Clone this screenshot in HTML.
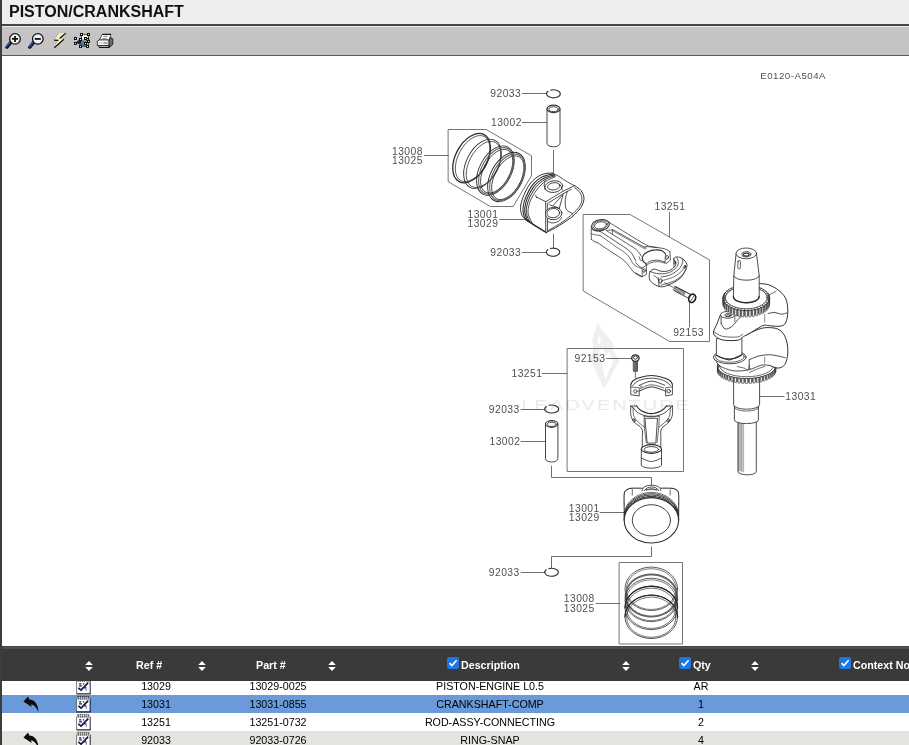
<!DOCTYPE html>
<html>
<head>
<meta charset="utf-8">
<title>PISTON/CRANKSHAFT</title>
<style>
html,body{margin:0;padding:0;overflow:hidden;}
body{width:909px;height:745px;overflow:hidden;background:#fff;position:relative;font-family:"Liberation Sans",sans-serif;}
.abs{position:absolute;}
#lb{left:0;top:0;width:2px;height:745px;background:#3d3d3d;z-index:6;}
#title{left:2px;top:0;width:907px;height:24px;background:#eeeeee;}
#title span{will-change:transform;position:absolute;left:6.6px;top:2px;font-size:16px;font-weight:bold;color:#111;line-height:19px;white-space:nowrap;}
#l1{left:0;top:24px;width:909px;height:2px;background:#444;}
#l2{left:2px;top:26px;width:907px;height:1px;background:#ececec;}
#tool{left:2px;top:27px;width:907px;height:28px;background:#c5c3c4;}
#l3{left:0;top:55px;width:909px;height:1px;background:#5a5a5a;}
#hdrtop{left:0;top:646px;width:909px;height:3.4px;background:linear-gradient(#3e3f3d,#555654 60%,#4a4b49);z-index:5;}
#hdr{left:0;top:648px;width:909px;height:32px;background:#3a3b38;}
.row{left:2px;width:907px;height:18px;font-size:10.7px;color:#000;}
.row span{will-change:transform;position:absolute;top:0;line-height:18px;text-align:center;white-space:nowrap;}
.hd{will-change:transform;position:absolute;color:#fff;font-weight:bold;font-size:10.7px;line-height:14px;white-space:nowrap;}
</style>
</head>
<body>
<div class="abs" id="title"><span>PISTON/CRANKSHAFT</span></div>
<div class="abs" id="l1"></div>
<div class="abs" id="l2"></div>
<div class="abs" id="tool"></div>
<div class="abs" id="l3"></div>
<!-- toolbar icons -->
<svg class="abs" style="left:0;top:27px;" width="130" height="28" viewBox="0 27 130 28">
<defs>
<linearGradient id="hg" x1="0" y1="0" x2="1" y2="1"><stop offset="0" stop-color="#5d8fd0"/><stop offset="0.5" stop-color="#1c3c78"/><stop offset="1" stop-color="#0a1430"/></linearGradient>
</defs>
<g id="zin">
<path d="M10.6 42.6 L6.9 47.2" stroke="#0c1836" stroke-width="3.4" stroke-linecap="round"/>
<path d="M10.1 42.2 L6.5 46.6" stroke="#3565ad" stroke-width="1.1" stroke-linecap="round"/>
<circle cx="15" cy="38.9" r="5.3" fill="#f4f4f4" stroke="#111" stroke-width="1.3"/>
<path d="M12 38.9 H18 M15 35.9 V41.9" stroke="#111" stroke-width="1.8"/>
</g>
<g id="zout">
<path d="M33.4 42.6 L29.7 47.2" stroke="#0c1836" stroke-width="3.4" stroke-linecap="round"/>
<path d="M32.9 42.2 L29.3 46.6" stroke="#3565ad" stroke-width="1.1" stroke-linecap="round"/>
<circle cx="37.8" cy="38.9" r="5.3" fill="#f4f4f4" stroke="#111" stroke-width="1.3"/>
<path d="M34.8 38.9 H40.8" stroke="#111" stroke-width="1.8"/>
</g>
<g id="bolt">
<path d="M58.5 33.2 L65.7 33 L59.5 38.6 L63.8 39.2 L54.2 47.7 L56.9 40.9 L54.05 39.9 Z" fill="#f1f3c2"/>
<path d="M65.7 33.1 L59.6 38.5 M63.9 39.3 L54.3 47.7 M54.1 40.1 L58.4 40.4" stroke="#0a0a0a" stroke-width="1.15" fill="none"/>
<path d="M58.5 33.5 L55.1 38.6 M57 41.3 L55.2 44.8" stroke="#333" stroke-width="0.6" stroke-dasharray="0.6 0.7" fill="none"/>
</g>
<g id="sel">
<rect x="81.8" y="35.3" width="6" height="3.8" fill="#f6f6e2"/>
<path d="M75.9 42.7 L79.7 38.9 L81.8 39.7 L81.8 44.4 L79.7 44.4 Z" fill="#1b1b5e"/>
<circle cx="83.7" cy="43.2" r="2.9" fill="#2e8f8a"/>
<path d="M81.45 34.5 H88.45" stroke="#5a2a1a" stroke-width="0.7"/>
<path d="M88.45 34.5 V46.4 M81.45 34.5 V39 M80.5 46.4 H87.5" stroke="#111" stroke-width="0.7"/>
<rect x="79.95" y="33.00" width="3" height="3" fill="#0a0a0a"/><rect x="80.95" y="34.00" width="1" height="1" fill="#fff"/><rect x="86.95" y="33.00" width="3" height="3" fill="#0a0a0a"/><rect x="87.95" y="34.00" width="1" height="1" fill="#fff"/><rect x="73.96" y="37.00" width="3" height="3" fill="#0a0a0a"/><rect x="74.96" y="38.00" width="1" height="1" fill="#fff"/><rect x="73.96" y="41.90" width="3" height="3" fill="#0a0a0a"/><rect x="74.96" y="42.90" width="1" height="1" fill="#fff"/><rect x="79.00" y="37.90" width="3" height="3" fill="#0a0a0a"/><rect x="80.00" y="38.90" width="1" height="1" fill="#fff"/><rect x="84.00" y="37.00" width="3" height="3" fill="#0a0a0a"/><rect x="85.00" y="38.00" width="1" height="1" fill="#fff"/><rect x="86.10" y="37.90" width="3" height="3" fill="#0a0a0a"/><rect x="87.10" y="38.90" width="1" height="1" fill="#fff"/><rect x="87.00" y="39.95" width="3" height="3" fill="#0a0a0a"/><rect x="88.00" y="40.95" width="1" height="1" fill="#fff"/><rect x="84.00" y="41.90" width="3" height="3" fill="#0a0a0a"/><rect x="85.00" y="42.90" width="1" height="1" fill="#fff"/><rect x="79.00" y="44.90" width="3" height="3" fill="#0a0a0a"/><rect x="80.00" y="45.90" width="1" height="1" fill="#fff"/><rect x="86.00" y="44.90" width="3" height="3" fill="#0a0a0a"/><rect x="87.00" y="45.90" width="1" height="1" fill="#fff"/>
</g>
<g id="prn">
<path d="M108.6 38.6 L111 37.6 L112.9 38.9 L112.9 44.4 L110 46.9 L108.8 46.9 Z" fill="#4a4a4a" stroke="#111" stroke-width="0.6"/>
<path d="M109.6 39.4 L111.8 40.6 M109.6 41.6 L111.8 42.8 M109.6 43.8 L111.6 44.6" stroke="#bdbdbd" stroke-width="0.7"/>
<path d="M102.3 34.4 L110.9 34.4 L108.9 40.2 L99.3 40.2 Z" fill="#fdfdfd" stroke="#111" stroke-width="0.7"/>
<path d="M102.2 34.4 H110.9" stroke="#111" stroke-width="1.1"/>
<path d="M103.4 36.4 H107.6 M102.4 38.4 H106.6" stroke="#666" stroke-width="0.8"/>
<path d="M97.3 41.2 L99.4 39.9 L108.8 39.9 L108.8 45.5 L97.3 45.5 Z" fill="#f4f4f4" stroke="#111" stroke-width="0.8"/>
<path d="M97.8 42.9 H108.4" stroke="#bbb" stroke-width="0.8"/>
<path d="M103.8 43 H107.4" stroke="#555" stroke-width="0.7"/>
<path d="M98.6 45.6 L99.2 47.3 L108.6 47.3 L108.8 45.6 Z" fill="#fafafa" stroke="#111" stroke-width="0.8"/>
<path d="M99 47.4 H109.6" stroke="#111" stroke-width="1.1"/>
</g>
</svg>

<svg class="abs" style="left:0;top:56px;will-change:transform;" width="909" height="590" viewBox="0 56 909 590" fill="none" stroke="#333" stroke-width="0.9" stroke-linecap="round" stroke-linejoin="round">
<style>
.lb{font-family:"Liberation Sans",sans-serif;font-size:10.3px;fill:#505050;stroke:none;}
.bx{stroke:#666;stroke-width:0.9;}
.ld{stroke:#555;stroke-width:0.85;}
.w{fill:#fff;}
</style>
<!-- code label -->
<text class="lb" x="760.3" y="79.1" style="font-size:9.7px;" textLength="65.2">E0120-A504A</text>
<!-- labels -->
<g>
<text class="lb" x="490.3" y="97.1" textLength="30.4">92033</text>
<text class="lb" x="491" y="125.8" textLength="30.4">13002</text>
<text class="lb" x="392" y="154.8" textLength="30.4">13008</text>
<text class="lb" x="392" y="163.8" textLength="30.4">13025</text>
<text class="lb" x="467.5" y="218.3" textLength="30.4">13001</text>
<text class="lb" x="467.5" y="227.3" textLength="30.4">13029</text>
<text class="lb" x="490.3" y="255.6" textLength="30.4">92033</text>
<text class="lb" x="654.5" y="210.3" textLength="30.4">13251</text>
<text class="lb" x="673.2" y="335.6" textLength="30.4">92153</text>
<text class="lb" x="574.5" y="362.0" textLength="30.4">92153</text>
<text class="lb" x="511.5" y="376.7" textLength="30.4">13251</text>
<text class="lb" x="488.8" y="412.6" textLength="30.4">92033</text>
<text class="lb" x="489.5" y="445.0" textLength="30.4">13002</text>
<text class="lb" x="785.3" y="400.3" textLength="30.4">13031</text>
<text class="lb" x="568.8" y="512.0" textLength="30.4">13001</text>
<text class="lb" x="568.8" y="520.9" textLength="30.4">13029</text>
<text class="lb" x="488.8" y="575.7" textLength="30.4">92033</text>
<text class="lb" x="563.8" y="602.1" textLength="30.4">13008</text>
<text class="lb" x="563.8" y="611.5" textLength="30.4">13025</text>
</g>
<!-- leaders -->
<g class="ld">
<path d="M522.3 93.5 L546.6 93.5"/>
<path d="M522.3 122.5 L547.0 122.5"/>
<path d="M424.5 155.5 L448.4 155.5"/>
<path d="M499.5 219.5 L526.0 219.5"/>
<path d="M522.3 252.5 L546.4 252.5"/>
<path d="M669.5 212.5 L669.5 236.7"/>
<path d="M689.5 302.0 L689.5 327.0"/>
<path d="M606.5 358.5 L631.5 358.5"/>
<path d="M542.3 373.5 L567.0 373.5"/>
<path d="M521.0 409.5 L545.0 409.5"/>
<path d="M521.0 441.5 L545.5 441.5"/>
<path d="M759.8 396.5 L784.0 396.5"/>
<path d="M600.0 512.5 L624.3 512.5"/>
<path d="M521.0 572.5 L544.8 572.5"/>
<path d="M596.0 603.5 L619.8 603.5"/>
<!-- axis lines -->
<path d="M553.5 150.0 L553.5 172.8"/>
<path d="M553.5 234.0 L553.5 247.4"/>
<path d="M551.5 466.0 L551.5 477.5 L651.5 477.5 L651.5 485.6"/>
<path d="M651.5 547.0 L651.5 556.5 L551.5 556.5 L551.5 567.9"/>
</g>
<!-- boxes -->
<g class="bx">
<path d="M448.5 129.5 H486.2 L531.5 155.8 V175.7 L513.2 206.5 H490.3 L448.5 181.9 Z"/>
<path d="M583.5 214.5 H630.1 L709.5 259.9 V341.5 H669.7 L583.5 291.1 Z"/>
<rect x="567.5" y="348.5" width="116" height="123"/>
<rect x="619.5" y="562.5" width="63" height="81.5"/>
</g>
<!-- snap rings -->
<g stroke-width="1.1">
<path d="M550.82 90.09 A6.9 4 0 1 1 548.11 91.23"/>
<path d="M550.49 248.49 A6.7 4 0 1 1 547.87 249.63"/>
<path d="M549.08 405.29 A7 4 0 1 1 546.34 406.43"/>
<path d="M548.95 568.59 A6.8 4 0 1 1 546.29 569.73"/>
</g>
<!-- pins -->
<g>
<path class="w" d="M547 109 V143.4 A6.5 3.4 0 0 0 560 143.4 V109"/>
<ellipse class="w" cx="553.5" cy="108.9" rx="6.5" ry="3.7" stroke-width="1.2"/>
<ellipse cx="553.5" cy="109.2" rx="4.6" ry="2.4"/>
<path class="w" d="M545.5 424 V458.7 A6.2 3.3 0 0 0 557.9 458.7 V424"/>
<ellipse class="w" cx="551.7" cy="424" rx="6.2" ry="3.3" stroke-width="1.2"/>
<ellipse cx="551.7" cy="424.3" rx="4.4" ry="2.1"/>
</g>

<!-- rings tilted -->
<g stroke="#2a2a2a" stroke-width="0.8">
<ellipse cx="471.6" cy="158.1" rx="16" ry="26.6" transform="rotate(28 471.6 158.1)" stroke-width="1.25"/>
<ellipse cx="472.6" cy="158.6" rx="14.4" ry="25" transform="rotate(28 472.6 158.6)" stroke-width="0.7"/>
<ellipse cx="482.5" cy="163.9" rx="16" ry="26.6" transform="rotate(28 482.5 163.9)" stroke-width="0.9"/>
<ellipse cx="483.5" cy="164.4" rx="14.4" ry="25" transform="rotate(28 483.5 164.4)" stroke-width="0.7"/>
<ellipse cx="495.4" cy="170.6" rx="16" ry="26.6" transform="rotate(28 495.4 170.6)" stroke-width="0.9"/>
<ellipse cx="496.1" cy="170.9" rx="14.6" ry="25.2" transform="rotate(28 496.1 170.9)" stroke-width="1.3" stroke-dasharray="0.6 1.1" stroke="#666"/>
<ellipse cx="496.7" cy="171.2" rx="13.2" ry="23.8" transform="rotate(28 496.7 171.2)" stroke-width="0.75"/>
<ellipse cx="506.5" cy="177.0" rx="16" ry="26.6" transform="rotate(28 506.5 177.0)" stroke-width="0.9"/>
<ellipse cx="507.2" cy="177.3" rx="14.6" ry="25.2" transform="rotate(28 507.2 177.3)" stroke-width="1.3" stroke-dasharray="0.6 1.1" stroke="#666"/>
<ellipse cx="507.8" cy="177.7" rx="13.2" ry="23.8" transform="rotate(28 507.8 177.7)" stroke-width="0.75"/>
</g>

<!-- rings front -->
<g stroke="#2a2a2a" stroke-width="0.8">
<ellipse cx="651.3" cy="588.8" rx="26.3" ry="21.7" stroke-width="0.75"/>
<ellipse cx="651.3" cy="589.0999999999999" rx="24.9" ry="20.4" stroke-width="0.6"/>
<ellipse cx="651.3" cy="595.5" rx="25.6" ry="21" stroke="#666" stroke-width="2" stroke-dasharray="1.1 1.0"/>
<ellipse cx="651.3" cy="599.9" rx="26.3" ry="21.7" stroke-width="0.75"/>
<ellipse cx="651.3" cy="600.1999999999999" rx="24.9" ry="20.4" stroke-width="0.6"/>
<ellipse cx="651.3" cy="607.9" rx="26.3" ry="21.7" stroke-width="0.8"/>
<path d="M625.0 607.9 A26.3 21.7 0 0 1 677.5999999999999 607.9" stroke-width="1.35"/>
<ellipse cx="651.3" cy="608.3" rx="24.6" ry="20.1" stroke-width="0.65"/>
<ellipse cx="651.3" cy="616.8" rx="26.3" ry="21.7" stroke-width="0.8"/>
<path d="M625.0 616.8 A26.3 21.7 0 0 1 677.5999999999999 616.8" stroke-width="1.35"/>
<ellipse cx="651.3" cy="617.1999999999999" rx="24.6" ry="20.1" stroke-width="0.65"/>
</g>

<!-- piston tilted -->
<g stroke="#2e2e2e" stroke-width="0.85">
<path class="w" d="M552.2 173.1 C551.1 173.1 547.7 172.9 545.2 173.6 C542.7 174.2 539.8 175.2 537.1 177.1 C534.5 179.0 531.4 181.8 529.1 185.1 C526.7 188.5 524.5 193.5 523.1 197.2 C521.6 200.9 520.7 204.3 520.5 207.3 C520.4 210.3 521.1 213.2 522.0 215.3 C523.0 217.4 524.2 218.4 526.1 219.9 C527.9 221.4 530.6 222.8 533.1 224.4 C535.6 226.0 539.0 228.1 541.2 229.4 C543.4 230.8 543.9 232.7 546.2 232.5 C548.6 232.2 552.4 229.5 555.3 227.9 C558.1 226.3 560.6 224.6 563.3 222.9 C566.0 221.1 569.0 219.2 571.4 217.4 C573.7 215.5 575.7 213.7 577.4 211.8 C579.2 209.9 580.9 207.9 581.9 205.8 C583.0 203.7 583.8 201.3 584.0 199.2 C584.1 197.1 583.5 195.0 582.7 193.2 C581.8 191.4 580.3 189.6 578.9 188.4 C577.6 187.1 576.3 186.7 574.4 185.6 C572.5 184.6 569.9 183.4 567.4 181.9 C564.8 180.4 561.8 178.1 559.3 176.6 C556.8 175.1 553.4 173.6 552.2 173.1 C551.1 172.5 553.4 173.0 552.2 173.1 Z" stroke="none"/>
<path d="M552.2 173.1 C551.1 173.1 547.7 172.9 545.2 173.6 C542.7 174.2 539.8 175.2 537.1 177.1 C534.5 179.0 531.4 181.8 529.1 185.1 C526.7 188.5 524.5 193.5 523.1 197.2 C521.6 200.9 520.7 204.3 520.5 207.3 C520.4 210.3 521.1 213.2 522.0 215.3 C523.0 217.4 524.2 218.4 526.1 219.9 C527.9 221.4 530.6 222.8 533.1 224.4 C535.6 226.0 539.0 228.1 541.2 229.4 C543.4 230.8 545.4 231.9 546.2 232.5" stroke-width="1"/>
<path d="M546.2 232.5 C547.7 231.7 552.4 229.5 555.3 227.9 C558.1 226.3 560.6 224.6 563.3 222.9 C566.0 221.1 569.0 219.2 571.4 217.4 C573.7 215.5 575.7 213.7 577.4 211.8 C579.2 209.9 580.9 207.9 581.9 205.8 C583.0 203.7 583.8 201.3 584.0 199.2 C584.1 197.1 583.5 195.0 582.7 193.2 C581.8 191.4 580.3 189.6 578.9 188.4 C577.6 187.1 575.2 186.1 574.4 185.6" stroke-width="1"/>
<path d="M526.1 219.9 C527.2 220.6 530.6 222.8 533.1 224.4 C535.6 226.0 539.0 228.1 541.2 229.4 C543.4 230.8 545.4 231.9 546.2 232.5" stroke-width="1.4"/>
<path d="M574.4 185.6 C573.2 185.0 569.9 183.4 567.4 181.9 C564.8 180.4 561.8 178.1 559.3 176.6 C556.8 175.1 553.4 173.6 552.2 173.1" />
<path d="M553.8 174.1 C552.7 174.2 549.6 174.3 547.2 175.1 C544.8 175.8 541.8 176.7 539.2 178.6 C536.6 180.4 533.9 183.0 531.6 186.1 C529.3 189.3 527.0 194.2 525.6 197.7 C524.1 201.2 523.4 204.5 523.1 207.3 C522.7 210.1 523.1 212.4 523.6 214.3 C524.0 216.3 524.8 217.8 525.6 218.9 C526.3 220.0 527.5 220.6 527.9 221.0" stroke-width="1.1"/>
<path d="M554.5 175.1 C553.5 175.3 551.0 175.5 548.7 176.3 C546.5 177.1 543.5 178.1 541.0 179.9 C538.4 181.7 535.6 184.3 533.3 187.3 C531.0 190.4 528.7 195.0 527.3 198.4 C525.9 201.8 525.2 205.1 524.9 207.7 C524.5 210.3 524.7 212.0 525.1 213.8 C525.4 215.7 526.2 217.5 526.9 218.9 C527.6 220.2 528.9 221.4 529.3 221.9" stroke-width="1.1"/>
<path d="M555.1 175.9 C554.2 176.1 551.8 176.6 549.7 177.5 C547.6 178.4 544.8 179.3 542.4 181.1 C539.9 183.0 537.2 185.5 534.9 188.6 C532.7 191.6 530.3 196.0 528.9 199.2 C527.5 202.5 526.9 205.7 526.5 208.1 C526.1 210.4 526.2 211.6 526.5 213.3 C526.7 215.0 527.3 216.8 528.1 218.4 C528.8 220.0 530.4 222.1 530.9 222.9" stroke-width="1"/>
<path d="M555.3 176.9 C554.5 177.2 552.4 177.9 550.4 178.9 C548.5 179.8 546.0 180.8 543.7 182.6 C541.4 184.5 538.8 187.1 536.6 190.0 C534.5 192.9 532.0 196.9 530.6 200.0 C529.2 203.1 528.7 206.3 528.3 208.5 C527.9 210.7 527.9 211.6 528.1 213.1 C528.3 214.7 528.8 216.1 529.6 217.9 C530.4 219.6 532.1 222.9 532.6 223.9" />
<path d="M545.7 232.5 L545.7 201.7 L562.3 191.7 L574.4 185.6" />
<path d="M547.4 230.9 L547.4 203.5 L563.3 193.7 L571.4 189.2" />
<path d="M547.4 230.9 C548.7 230.2 552.6 228.0 555.3 226.4 C557.9 224.8 560.8 223.1 563.3 221.4 C565.8 219.6 568.2 217.7 570.4 215.8 C572.6 214.0 574.7 212.1 576.4 210.3 C578.1 208.5 579.5 206.6 580.4 204.8 C581.4 202.9 581.9 201.0 581.9 199.2 C582.0 197.5 581.6 195.7 580.9 194.2 C580.3 192.7 579.0 191.3 577.9 190.2 C576.8 189.1 575.0 188.1 574.4 187.7" />
<ellipse cx="553.8" cy="186.6" rx="8.9" ry="5.8" transform="rotate(-8 553.8 186.6)" class="w"/>
<ellipse cx="553.8" cy="186.3" rx="6.2" ry="3.6" transform="rotate(-8 553.8 186.3)" />
<ellipse cx="553.6" cy="213.5" rx="8.3" ry="6.2" transform="rotate(-5 553.6 213.5)" class="w"/>
<ellipse cx="553.3" cy="213.1" rx="6.4" ry="4.6" transform="rotate(-5 553.3 213.1)" />
<path d="M547.4 221.4 C548.2 221.6 550.4 222.9 552.2 222.9 C554.1 222.9 556.7 222.3 558.3 221.4 C559.9 220.5 561.2 218.0 561.8 217.4" />
<path d="M545.2 180.1 C545.0 180.9 544.2 183.5 544.2 185.1 C544.2 186.7 545.0 188.9 545.2 189.7" />
<path d="M536.9 197.2 L545.7 201.7" />
<path d="M535.6 195.2 L536.6 197.7" />
<path d="M567.4 191.4 C567.0 192.7 565.5 196.2 565.3 199.2 C565.2 202.2 565.1 206.9 566.3 209.3 C567.6 211.7 571.8 213.1 572.9 213.8" />
<path d="M553.3 205.3 L562.3 195.2" />
<path d="M549.7 204.8 L559.3 208.3" />
<path d="M559.3 208.3 L563.3 193.7" />
<path d="M562.3 190.2 C562.1 189.6 561.8 187.7 561.3 186.6 C560.8 185.6 559.6 184.5 559.3 184.1" />
</g>

<!-- con rod upper -->
<g stroke="#2e2e2e" stroke-width="0.8">
<path class="w" stroke="none" d="M591.4 226.1 L592.0 221.4 L600.5 219.3 L609.0 222.3 L645.2 244.4 L650.8 246.6 L653.5 247.0 L664.8 248.9 L669.9 251.7 L670.4 260.2 L666.2 263.5 L664.8 262.1 L658.2 260.2 L650.7 261.1 L646.4 264.6 L646.4 274.3 L642.2 276.7 L635.6 272.9 L633.9 272.2 L624.5 260.9 L597.2 242.5 L591.4 239.3 Z"/>
<ellipse cx="600.5" cy="225.2" rx="9.0" ry="5.6" transform="rotate(-10 600.5 225.2)" class="w" stroke-width="1"/>
<ellipse cx="600.5" cy="225.2" rx="7.5" ry="4.5" transform="rotate(-10 600.5 225.2)" stroke-width="0.6"/>
<ellipse cx="600.5" cy="225.3" rx="6.0" ry="3.5" transform="rotate(-10 600.5 225.3)" />
<path d="M591.4 226.1 C591.4 227.2 591.2 230.5 591.2 232.7 C591.2 234.9 591.4 238.2 591.4 239.3" />
<path d="M591.4 239.3 C591.8 239.6 593.0 240.8 593.9 241.3 C594.9 241.9 596.7 242.3 597.2 242.5" />
<path d="M591.4 233.6 C591.9 233.8 593.0 234.2 594.4 234.6 C595.8 234.9 599.1 235.3 600.0 235.5" stroke-width="0.7"/>
<path d="M592.0 229.4 C592.6 229.6 594.2 230.6 595.3 230.8 C596.5 231.0 597.7 231.0 599.1 230.8 C600.5 230.6 603.0 230.0 603.8 229.9" stroke-width="0.7"/>
<path d="M609.0 222.3 C612.0 224.2 621.3 229.9 627.3 233.6 C633.3 237.3 641.2 242.3 645.2 244.4 C649.1 246.6 648.8 246.0 650.8 246.6 C652.8 247.1 656.3 247.5 657.4 247.7" />
<path d="M612.3 229.4 L646.1 248.2" />
<path d="M612.7 230.8 L645.2 249.1" stroke-width="0.6"/>
<path d="M606.6 230.8 C609.3 232.4 617.7 237.5 622.6 240.7 C627.5 243.8 633.1 247.0 636.2 249.6 C639.4 252.2 640.5 255.1 641.4 256.2" />
<path d="M606.6 230.3 L612.3 229.9 L612.3 234.1" stroke-width="0.7"/>
<path d="M599.1 230.8 C601.8 232.5 609.9 237.7 615.1 241.1 C620.2 244.6 626.7 248.2 630.1 251.5 C633.6 254.8 634.8 259.3 635.8 260.9" />
<path d="M600.0 235.5 C602.4 237.1 609.6 242.2 614.1 245.4 C618.7 248.6 624.0 251.6 627.3 254.8 C630.6 258.0 631.5 262.4 633.9 264.6 C636.2 266.9 640.1 267.8 641.4 268.4" stroke-width="0.7"/>
<path d="M597.2 242.5 C599.6 244.1 606.8 248.9 611.3 251.9 C615.9 255.0 620.7 257.5 624.5 260.9 C628.2 264.2 631.1 269.5 633.9 272.2 C636.7 274.8 640.1 276.1 641.4 276.8" />
<path d="M645.0 246.6 C646.4 246.7 650.2 246.7 653.5 247.0 C656.8 247.4 662.0 248.1 664.8 248.9 C667.5 249.7 669.1 251.3 669.9 251.7" />
<path d="M669.9 251.7 L670.4 260.2 L666.2 263.5 L664.8 262.1" />
<ellipse cx="667.1" cy="257.4" rx="1.3" ry="2.1" transform="rotate(10 667.1 257.4)" />
<path d="M646.0 264.0 C645.4 263.3 643.2 261.6 642.7 260.2 C642.2 258.8 642.3 256.9 643.2 255.5 C644.0 254.1 645.8 252.7 647.9 251.7 C649.9 250.8 653.0 250.0 655.4 249.9 C657.7 249.7 660.3 250.1 662.0 250.8 C663.6 251.5 664.9 253.4 665.5 253.9" stroke-width="1.1"/>
<path d="M646.0 264.0 C646.8 263.5 648.6 261.8 650.7 261.1 C652.7 260.5 655.8 260.1 658.2 260.2 C660.5 260.4 663.7 261.8 664.8 262.1" />
<path d="M646.7 265.2 C647.5 264.7 649.2 263.2 651.1 262.6 C653.1 262.0 655.9 261.5 658.2 261.6 C660.5 261.7 663.8 263.0 665.0 263.3" stroke-width="0.7"/>
<path d="M665.5 253.9 L665.0 262.1" stroke-width="0.7"/>
<path d="M646.4 264.6 L646.4 274.3 L642.2 276.7 L635.6 272.9" />
<path d="M642.2 267.7 L642.2 276.7" stroke-width="0.7"/>
<path d="M635.6 262.6 C636.2 263.1 637.8 265.0 638.9 265.8 C640.0 266.7 641.0 267.8 642.2 267.7 C643.4 267.6 645.5 265.6 646.2 265.2" stroke-width="0.8"/>
<ellipse cx="644.1" cy="270.5" rx="1.2" ry="1.9" transform="rotate(10 644.1 270.5)" />
<path d="M639.4 256.9 C639.6 257.5 639.8 259.7 640.3 260.2 C640.9 260.8 642.3 260.2 642.7 260.2" stroke-width="0.7"/>
</g>
<g stroke="#2e2e2e" stroke-width="0.8">
<path d="M650.2 271.5 C651.1 270.1 652.6 269.2 654.4 269.1 C656.2 269.1 658.8 270.9 661.0 271.2 C663.2 271.5 665.5 271.6 667.6 271.0 C669.7 270.5 672.0 269.2 673.4 267.9 C674.8 266.7 675.8 265.0 675.9 263.5 C675.9 262.0 673.5 259.9 673.7 258.8 C673.9 257.7 675.5 256.9 677.0 256.9 C678.5 256.9 681.0 257.5 682.6 258.8 C684.3 260.1 686.4 262.6 686.9 264.4 C687.3 266.3 686.5 267.9 685.5 270.1 C684.4 272.3 682.6 275.6 680.8 277.6 C678.9 279.6 676.7 280.9 674.2 282.3 C671.7 283.7 668.2 285.3 665.7 286.1 C663.2 286.8 661.5 287.1 659.1 286.5 C656.8 285.9 653.3 283.8 651.6 282.3 C650.0 280.8 649.5 279.4 649.3 277.6 C649.0 275.8 649.3 272.9 650.2 271.5 Z" class="w" stroke-width="0.9"/>
<path d="M650.2 271.5 C651.2 271.8 654.2 273.0 656.3 273.4 C658.4 273.8 660.5 274.1 662.9 273.8 C665.2 273.6 668.1 273.1 670.4 272.0 C672.7 270.9 675.2 268.8 676.5 267.3 C677.9 265.7 678.3 264.0 678.4 262.6 C678.5 261.1 677.2 259.0 677.0 258.3" />
<path d="M661.0 277.1 C662.6 276.7 667.4 276.1 670.4 274.8 C673.4 273.4 676.8 271.2 678.9 269.1 C680.9 267.1 682.1 264.3 682.6 262.6 C683.2 260.8 682.2 259.4 682.2 258.8" />
<path d="M662.0 280.6 C663.7 280.1 669.2 279.0 672.3 277.6 C675.4 276.2 678.6 274.0 680.8 272.0 C682.9 269.9 684.7 266.5 685.5 265.4" stroke-width="0.7"/>
<path d="M661.0 285.1 C663.1 284.5 669.8 282.9 673.2 281.4 C676.7 279.8 679.5 277.8 681.7 275.7 C683.9 273.7 685.5 270.2 686.2 269.1" stroke-width="0.7"/>
<ellipse cx="660.5" cy="281.1" rx="1.5" ry="2.3" transform="rotate(15 660.5 281.1)" />
<ellipse cx="684.8" cy="266.8" rx="0.8" ry="1.6" transform="rotate(15 684.8 266.8)" />
<ellipse cx="674.9" cy="262.6" rx="0.8" ry="1.5" transform="rotate(15 674.9 262.6)" />
<path d="M658.2 277.6 L659.1 286.5" />
<path d="M654.0 275.7 C654.4 275.9 655.6 276.5 656.3 277.1 C657.0 277.8 657.9 279.1 658.2 279.5" stroke-width="0.7"/>
<path d="M673.7 258.8 L674.0 266.8" stroke-width="0.7"/>
</g>
<g stroke="#2e2e2e" stroke-width="0.8">
<path d="M664.7 282.8 L673.4 287.6" stroke-width="0.7" stroke-dasharray="3 0.8"/>
<path d="M676.0 287.0 L690.6 294.5" />
<path d="M676.0 287.0 L675.0 287.3 L674.3 288.6 L674.3 290.7 L688.2 298.0 L690.6 294.5 Z" class="w" stroke="none"/>
<path d="M690.6 294.5 C688.1 293.3 678.6 288.2 676.0 287.0 C673.4 285.8 675.2 287.0 674.9 287.3 C674.7 287.6 674.3 288.3 674.2 288.9 C674.1 289.4 672.0 289.2 674.3 290.7 C676.7 292.3 685.9 296.8 688.2 298.0" stroke-width="0.95"/>
<path d="M676.22 287.13 L674.90 290.51 M677.34 287.71 L676.03 291.09 M678.47 288.29 L677.16 291.68 M679.60 288.88 L678.28 292.26 M680.73 289.46 L679.41 292.84 M681.86 290.04 L680.54 293.43 M682.98 290.62 L681.67 294.01 M684.11 291.21 L682.80 294.59 M685.24 291.79 L683.92 295.17 " stroke-width="0.7" stroke="#333"/>
<ellipse cx="692.2" cy="298.3" rx="3.3" ry="4.3" transform="rotate(25 692.2 298.3)" class="w" stroke-width="1.7" stroke="#1c1c1c"/>
<path d="M690.8 300.6 L693.9 296.2" stroke-width="0.8"/>
</g>

<!-- crankshaft -->
<g stroke="#2e2e2e" stroke-width="0.85">
<path d="M738.2 420.2 L738.2 471.8" />
<path class="w" d="M738.2 420 V471.6 A9 3.2 0 0 0 756.3 471.6 V420 Z"/>
<path d="M740.0 422.4 L740.0 470.7" stroke-width="0.7"/>
<path d="M741.9 422.4 L741.9 471.4" stroke-width="0.7"/>
<path d="M743.6 422.4 L743.6 471.8" stroke-width="0.6" stroke="#777"/>
<path class="w" d="M734.4 405.2 V420 A12 3.6 0 0 0 758.4 420 V405.2 Z"/>
<path class="w" d="M733.6 376 V404.6 A13 4.6 0 0 0 759.6 404.6 V376 Z"/>
<path d="M734.4 407.4 A12 3.6 0 0 0 758.6 407.4" stroke-width="0.7"/>
<path d="M717.4 366.3 V370.3 A29.2 12.4 0 0 0 775.8000000000001 370.3 V366.3 Z" fill="#6a6a6a" stroke="none"/>
<ellipse class="w" cx="746.6" cy="366.3" rx="29.2" ry="12.4" stroke-width="0.8"/>
<path d="M773.17 361.15 V365.95 L773.96 366.76 V361.96 Z" fill="#fff" stroke="#2a2a2a" stroke-width="0.55"/>
<path d="M774.52 362.67 V367.47 L775.05 368.32 V363.52 Z" fill="#fff" stroke="#2a2a2a" stroke-width="0.55"/>
<path d="M775.40 364.25 V369.05 L775.67 369.92 V365.12 Z" fill="#fff" stroke="#2a2a2a" stroke-width="0.55"/>
<path d="M775.78 365.86 V370.66 L775.78 371.54 V366.74 Z" fill="#fff" stroke="#2a2a2a" stroke-width="0.55"/>
<path d="M775.67 367.48 V372.28 L775.40 373.15 V368.35 Z" fill="#fff" stroke="#2a2a2a" stroke-width="0.55"/>
<path d="M775.05 369.08 V373.88 L774.52 374.73 V369.93 Z" fill="#fff" stroke="#2a2a2a" stroke-width="0.55"/>
<path d="M773.96 370.64 V375.44 L773.17 376.25 V371.45 Z" fill="#fff" stroke="#2a2a2a" stroke-width="0.55"/>
<path d="M772.39 372.12 V376.92 L771.36 377.68 V372.88 Z" fill="#fff" stroke="#2a2a2a" stroke-width="0.55"/>
<path d="M770.38 373.50 V378.30 L769.12 378.99 V374.19 Z" fill="#fff" stroke="#2a2a2a" stroke-width="0.55"/>
<path d="M767.96 374.75 V379.55 L766.51 380.17 V375.37 Z" fill="#fff" stroke="#2a2a2a" stroke-width="0.55"/>
<path d="M765.18 375.86 V380.66 L763.55 381.20 V376.40 Z" fill="#fff" stroke="#2a2a2a" stroke-width="0.55"/>
<path d="M762.08 376.81 V381.61 L760.30 382.05 V377.25 Z" fill="#fff" stroke="#2a2a2a" stroke-width="0.55"/>
<path d="M758.72 377.58 V382.38 L756.81 382.72 V377.92 Z" fill="#fff" stroke="#2a2a2a" stroke-width="0.55"/>
<path d="M755.15 378.16 V382.96 L753.16 383.18 V378.38 Z" fill="#fff" stroke="#2a2a2a" stroke-width="0.55"/>
<path d="M751.43 378.53 V383.33 L749.39 383.44 V378.64 Z" fill="#fff" stroke="#2a2a2a" stroke-width="0.55"/>
<path d="M747.63 378.69 V383.49 L745.57 383.49 V378.69 Z" fill="#fff" stroke="#2a2a2a" stroke-width="0.55"/>
<path d="M743.81 378.64 V383.44 L741.77 383.33 V378.53 Z" fill="#fff" stroke="#2a2a2a" stroke-width="0.55"/>
<path d="M740.04 378.38 V383.18 L738.05 382.96 V378.16 Z" fill="#fff" stroke="#2a2a2a" stroke-width="0.55"/>
<path d="M736.39 377.92 V382.72 L734.48 382.38 V377.58 Z" fill="#fff" stroke="#2a2a2a" stroke-width="0.55"/>
<path d="M732.90 377.25 V382.05 L731.12 381.61 V376.81 Z" fill="#fff" stroke="#2a2a2a" stroke-width="0.55"/>
<path d="M729.65 376.40 V381.20 L728.02 380.66 V375.86 Z" fill="#fff" stroke="#2a2a2a" stroke-width="0.55"/>
<path d="M726.69 375.37 V380.17 L725.24 379.55 V374.75 Z" fill="#fff" stroke="#2a2a2a" stroke-width="0.55"/>
<path d="M724.08 374.19 V378.99 L722.82 378.30 V373.50 Z" fill="#fff" stroke="#2a2a2a" stroke-width="0.55"/>
<path d="M721.84 372.88 V377.68 L720.81 376.92 V372.12 Z" fill="#fff" stroke="#2a2a2a" stroke-width="0.55"/>
<path d="M720.03 371.45 V376.25 L719.24 375.44 V370.64 Z" fill="#fff" stroke="#2a2a2a" stroke-width="0.55"/>
<path d="M718.68 369.93 V374.73 L718.15 373.88 V369.08 Z" fill="#fff" stroke="#2a2a2a" stroke-width="0.55"/>
<path d="M717.80 368.35 V373.15 L717.53 372.28 V367.48 Z" fill="#fff" stroke="#2a2a2a" stroke-width="0.55"/>
<path d="M717.42 366.74 V371.54 L717.42 370.66 V365.86 Z" fill="#fff" stroke="#2a2a2a" stroke-width="0.55"/>
<path d="M717.53 365.12 V369.92 L717.80 369.05 V364.25 Z" fill="#fff" stroke="#2a2a2a" stroke-width="0.55"/>
<path d="M718.15 363.52 V368.32 L718.68 367.47 V362.67 Z" fill="#fff" stroke="#2a2a2a" stroke-width="0.55"/>
<path d="M719.24 361.96 V366.76 L720.03 365.95 V361.15 Z" fill="#fff" stroke="#2a2a2a" stroke-width="0.55"/>
<ellipse cx="746.6" cy="365.90000000000003" rx="26.8" ry="10.8" stroke-width="0.7"/>
<path d="M745.3 335.6 C752.3 333.9 754.6 330.5 758.7 329.2 C762.7 327.8 765.8 327.4 769.4 327.6 C773.0 327.7 777.3 328.2 780.1 330.3 C782.9 332.3 784.9 335.8 786.2 339.6 C787.5 343.4 788.0 348.9 787.8 353.1 C787.6 357.2 786.4 362.0 784.8 364.5 C783.2 367.0 780.7 367.9 778.1 368.1 C775.6 368.2 772.2 365.9 769.4 365.4 C766.6 364.9 764.5 364.5 761.4 365.1 C758.2 365.8 753.7 368.2 750.6 369.2 C747.5 370.1 745.7 370.5 742.6 370.8 C739.4 371.0 735.6 371.3 731.8 370.5 C728.0 369.7 722.7 367.9 719.8 365.8 C716.8 363.7 714.7 359.9 714.1 357.8 C713.6 355.6 716.0 356.1 716.4 353.1 C716.8 350.0 711.6 342.6 716.4 339.6 C721.2 336.7 738.2 337.4 745.3 335.6 Z" class="w" stroke="none"/>
<path d="M745.3 335.6 C747.5 334.5 754.6 330.5 758.7 329.2 C762.7 327.8 765.8 327.4 769.4 327.6 C773.0 327.7 777.3 328.2 780.1 330.3 C782.9 332.3 784.9 335.8 786.2 339.6 C787.5 343.4 788.0 348.9 787.8 353.1 C787.6 357.2 786.4 362.0 784.8 364.5 C783.2 367.0 780.7 367.9 778.1 368.1 C775.6 368.2 770.9 365.9 769.4 365.4" stroke-width="1"/>
<path d="M749.3 359.8 C750.8 359.1 755.3 356.9 758.7 356.0 C762.0 355.2 766.2 354.7 769.4 354.7 C772.6 354.7 775.4 355.5 778.1 356.0 C780.8 356.5 784.3 357.5 785.5 357.8" />
<path d="M769.4 365.4 C768.1 365.4 764.5 364.5 761.4 365.1 C758.2 365.8 752.6 369.2 750.6 369.2 C748.6 369.2 749.5 366.7 749.3 365.1 C749.1 363.6 749.3 360.7 749.3 359.8" />
<path d="M750.6 369.2 C749.3 369.4 745.7 370.5 742.6 370.8 C739.4 371.0 735.6 371.3 731.8 370.5 C728.0 369.7 722.7 367.9 719.8 365.8 C716.8 363.7 715.1 359.1 714.1 357.8" />
<path d="M764.7 357.1 L764.7 363.1" stroke="#777"/>
<path d="M737.2 366.5 C738.5 366.8 743.5 367.8 745.3 368.5 C747.0 369.2 747.3 371.1 747.9 370.5 C748.6 369.9 749.1 366.0 749.3 365.1" stroke-width="0.7"/>
<path d="M749.3 372.5 C750.8 371.8 756.1 369.5 758.7 368.5 C761.2 367.5 763.7 366.8 764.7 366.5" stroke-width="0.7"/>
<ellipse cx="729.8" cy="357.1" rx="16.4" ry="6.7" class="w"/>
<ellipse cx="729.8" cy="356.7" rx="14.5" ry="5.6" stroke-width="0.7"/>
<path class="w" d="M716.4 339.0 L716.4 354.4 A12.8 5 0 0 0 741.9 353.7 L741.9 338.3 Z"/>
<path d="M716.4 355.5 C718.5 356.2 724.9 359.9 729.2 359.8 C733.4 359.6 739.8 355.5 741.9 354.7" stroke-width="1.2"/>
<path d="M751.3 283.3 C753.7 278.6 756.7 283.3 759.7 283.6 C762.8 283.9 766.0 283.7 769.4 285.0 C772.8 286.4 777.3 289.0 780.1 291.5 C783.0 294.0 785.0 296.5 786.3 300.1 C787.6 303.6 787.9 309.0 787.8 312.8 C787.7 316.6 786.8 320.6 785.5 322.9 C784.2 325.1 782.8 325.8 780.1 326.2 C777.5 326.7 772.1 325.9 769.4 325.7 C766.7 325.5 765.8 324.8 764.0 325.2 C762.2 325.5 760.8 326.7 758.7 327.8 C756.5 329.0 753.5 331.0 751.3 332.3 C749.1 333.6 746.7 334.8 745.3 335.6 C743.8 336.4 743.9 336.4 742.6 337.2 C741.2 338.0 740.6 339.9 737.2 340.3 C733.8 340.8 726.1 340.7 722.4 339.9 C718.8 339.2 716.5 337.3 715.1 335.9 C713.6 334.5 713.3 333.7 713.6 331.6 C713.9 329.5 715.9 326.3 717.1 323.5 C718.2 320.7 718.6 316.8 720.4 314.8 C722.2 312.8 725.2 311.6 727.8 311.5 C730.4 311.4 733.0 314.2 735.9 314.2 C738.8 314.2 742.7 316.6 745.3 311.5 C747.8 306.3 748.9 287.9 751.3 283.3 Z" class="w" stroke="none"/>
<path d="M759.7 283.6 C761.4 283.8 766.0 283.7 769.4 285.0 C772.8 286.4 777.3 289.0 780.1 291.5 C783.0 294.0 785.0 296.5 786.3 300.1 C787.6 303.6 787.9 309.0 787.8 312.8 C787.7 316.6 786.8 320.6 785.5 322.9 C784.2 325.1 782.8 325.8 780.1 326.2 C777.5 326.7 772.1 325.9 769.4 325.7 C766.7 325.5 765.8 324.8 764.0 325.2 C762.2 325.5 760.8 326.7 758.7 327.8 C756.5 329.0 753.5 331.0 751.3 332.3 C749.1 333.6 746.7 334.8 745.3 335.6 C743.8 336.4 743.9 336.4 742.6 337.2 C741.2 338.0 740.6 339.9 737.2 340.3 C733.8 340.8 726.1 340.7 722.4 339.9 C718.8 339.2 716.5 337.3 715.1 335.9 C713.6 334.5 713.3 333.7 713.6 331.6 C713.9 329.5 715.9 326.3 717.1 323.5 C718.2 320.7 719.9 316.3 720.4 314.8" stroke-width="1"/>
<path d="M768.1 313.5 C769.2 313.3 772.5 312.4 774.8 312.5 C777.0 312.7 779.5 314.1 781.5 314.2 C783.5 314.2 786.0 313.0 786.8 312.8" />
<path d="M764.7 314.2 L764.7 322.2" stroke="#777"/>
<path d="M769.4 294.7 L776.1 291.3" stroke-width="0.7"/>
<path d="M721.1 323.5 C721.8 324.4 723.3 328.4 725.1 328.9 C726.9 329.4 729.4 328.4 731.8 326.5 C734.3 324.6 737.6 319.5 739.9 317.5 C742.1 315.6 744.4 315.3 745.3 314.8" />
<path d="M735.2 314.8 C735.7 315.0 736.9 315.8 738.5 315.8 C740.2 315.8 742.8 315.1 745.3 314.8 C747.7 314.6 752.0 314.3 753.3 314.2" />
<path d="M713.6 331.6 C715.1 332.4 718.5 335.4 722.4 336.3 C726.4 337.2 733.8 337.3 737.2 337.0 C740.6 336.6 741.7 334.7 742.6 334.3" stroke-width="0.7"/>
<path d="M721.1 316.2 L721.1 323.5" />
<path d="M734.8 316.2 L734.8 321.5" stroke-width="0.7"/>
<ellipse cx="727.8" cy="314.8" rx="7.4" ry="3.4" class="w"/>
<ellipse cx="728.1" cy="315.2" rx="3.4" ry="1.5" />
<ellipse cx="728.1" cy="315.5" rx="2.0" ry="0.8" stroke-width="0.6"/>
<path d="M723.0 298.0 V303.5 A23.3 12.8 0 0 0 769.5999999999999 303.5 V298.0 Z" fill="#6a6a6a" stroke="none"/>
<ellipse class="w" cx="746.3" cy="298.0" rx="23.3" ry="12.8" stroke-width="0.8"/>
<path d="M768.13 293.53 V299.83 L768.74 300.86 V294.56 Z" fill="#fff" stroke="#2a2a2a" stroke-width="0.55"/>
<path d="M769.14 295.46 V301.76 L769.45 302.84 V296.54 Z" fill="#fff" stroke="#2a2a2a" stroke-width="0.55"/>
<path d="M769.58 297.46 V303.76 L769.58 304.84 V298.54 Z" fill="#fff" stroke="#2a2a2a" stroke-width="0.55"/>
<path d="M769.45 299.46 V305.76 L769.14 306.84 V300.54 Z" fill="#fff" stroke="#2a2a2a" stroke-width="0.55"/>
<path d="M768.74 301.44 V307.74 L768.13 308.77 V302.47 Z" fill="#fff" stroke="#2a2a2a" stroke-width="0.55"/>
<path d="M767.49 303.32 V309.62 L766.59 310.59 V304.29 Z" fill="#fff" stroke="#2a2a2a" stroke-width="0.55"/>
<path d="M765.71 305.08 V311.38 L764.55 312.26 V305.96 Z" fill="#fff" stroke="#2a2a2a" stroke-width="0.55"/>
<path d="M763.46 306.66 V312.96 L762.06 313.73 V307.43 Z" fill="#fff" stroke="#2a2a2a" stroke-width="0.55"/>
<path d="M760.78 308.03 V314.33 L759.18 314.97 V308.67 Z" fill="#fff" stroke="#2a2a2a" stroke-width="0.55"/>
<path d="M757.75 309.15 V315.45 L755.99 315.94 V309.64 Z" fill="#fff" stroke="#2a2a2a" stroke-width="0.55"/>
<path d="M754.43 309.99 V316.29 L752.55 316.63 V310.33 Z" fill="#fff" stroke="#2a2a2a" stroke-width="0.55"/>
<path d="M750.92 310.55 V316.85 L748.97 317.02 V310.72 Z" fill="#fff" stroke="#2a2a2a" stroke-width="0.55"/>
<path d="M747.29 310.79 V317.09 L745.31 317.09 V310.79 Z" fill="#fff" stroke="#2a2a2a" stroke-width="0.55"/>
<path d="M743.63 310.72 V317.02 L741.68 316.85 V310.55 Z" fill="#fff" stroke="#2a2a2a" stroke-width="0.55"/>
<path d="M740.05 310.33 V316.63 L738.17 316.29 V309.99 Z" fill="#fff" stroke="#2a2a2a" stroke-width="0.55"/>
<path d="M736.61 309.64 V315.94 L734.85 315.45 V309.15 Z" fill="#fff" stroke="#2a2a2a" stroke-width="0.55"/>
<path d="M733.42 308.67 V314.97 L731.82 314.33 V308.03 Z" fill="#fff" stroke="#2a2a2a" stroke-width="0.55"/>
<path d="M730.54 307.43 V313.73 L729.14 312.96 V306.66 Z" fill="#fff" stroke="#2a2a2a" stroke-width="0.55"/>
<path d="M728.05 305.96 V312.26 L726.89 311.38 V305.08 Z" fill="#fff" stroke="#2a2a2a" stroke-width="0.55"/>
<path d="M726.01 304.29 V310.59 L725.11 309.62 V303.32 Z" fill="#fff" stroke="#2a2a2a" stroke-width="0.55"/>
<path d="M724.47 302.47 V308.77 L723.86 307.74 V301.44 Z" fill="#fff" stroke="#2a2a2a" stroke-width="0.55"/>
<path d="M723.46 300.54 V306.84 L723.15 305.76 V299.46 Z" fill="#fff" stroke="#2a2a2a" stroke-width="0.55"/>
<path d="M723.02 298.54 V304.84 L723.02 303.76 V297.46 Z" fill="#fff" stroke="#2a2a2a" stroke-width="0.55"/>
<path d="M723.15 296.54 V302.84 L723.46 301.76 V295.46 Z" fill="#fff" stroke="#2a2a2a" stroke-width="0.55"/>
<path d="M723.86 294.56 V300.86 L724.47 299.83 V293.53 Z" fill="#fff" stroke="#2a2a2a" stroke-width="0.55"/>
<path d="M764.0 289.7 L762.3 290.7 M766.2 291.3 L764.3 292.1 M767.8 293.1 L765.8 293.7 M769.0 295.0 L766.8 295.4 M769.5 297.0 L767.3 297.1 M769.5 299.0 L767.3 298.9 M769.0 301.0 L766.8 300.6 M767.8 302.9 L765.8 302.3 M766.2 304.7 L764.3 303.9 M764.0 306.3 L762.3 305.3 M761.4 307.7 L760.0 306.6 M758.5 308.9 L757.3 307.6 M755.2 309.8 L754.4 308.4 M751.7 310.4 L751.2 309.0 M748.1 310.8 L748.0 309.3 M744.5 310.8 L744.6 309.3 M740.9 310.4 L741.4 309.0 M737.4 309.8 L738.2 308.4 M734.1 308.9 L735.3 307.6 M731.2 307.7 L732.6 306.6 M728.6 306.3 L730.3 305.3 M726.4 304.7 L728.3 303.9 M724.8 302.9 L726.8 302.3 M723.6 301.0 L725.8 300.6 M723.1 299.0 L725.3 298.9 M723.1 297.0 L725.3 297.1 M723.6 295.0 L725.8 295.4 M724.8 293.1 L726.8 293.7 M726.4 291.3 L728.3 292.1 M728.6 289.7 L730.3 290.7 M731.2 288.3 L732.6 289.4 M734.1 287.1 L735.3 288.4 M737.4 286.2 L738.2 287.6 M740.9 285.6 L741.4 287.0 M744.5 285.2 L744.6 286.7 M748.1 285.2 L748.0 286.7 M751.7 285.6 L751.2 287.0 M755.2 286.2 L754.4 287.6 M758.5 287.1 L757.3 288.4 M761.4 288.3 L760.0 289.4 " stroke-width="0.7"/>
<ellipse cx="746.3" cy="297.7" rx="20.900000000000002" ry="11.100000000000001" stroke-width="0.8"/>
<path class="w" d="M733.8 275.4 L733.4 296.7 A12.9 6.2 0 0 0 759.2 296.4 L759.2 275.4 Z"/>
<path d="M733.4 296.7 A12.9 6.2 0 0 0 759.2 296.4" stroke-width="1.4"/>
<path class="w" d="M736.1 253.7 L733.8 275.4 A12.7 4.8 0 0 0 759.2 275.4 L756.5 253.7 Z"/>
<ellipse cx="746.3" cy="253.4" rx="10.3" ry="5.4" class="w"/>
<ellipse cx="746.3" cy="254.3" rx="4.5" ry="2.6" />
<ellipse cx="746.3" cy="254.6" rx="2.9" ry="1.5" stroke-width="1.1"/>
<path d="M738.1 261.3 C738.3 260.1 739.2 260.6 739.6 260.6 C740.0 260.6 740.3 260.2 740.4 261.5 C740.5 262.7 740.5 266.9 740.2 268.1 C740.0 269.3 739.3 268.8 738.9 268.8 C738.5 268.7 738.0 268.9 737.8 267.7 C737.7 266.4 737.8 262.4 738.1 261.3 Z" stroke-width="0.8"/>
</g>

<!-- lower group: bolt, cap, rod -->
<g stroke="#2e2e2e" stroke-width="0.85">
<path d="M635.4 371.2 L635.4 377.5" stroke-width="0.7"/>
<path d="M633.3 361.6 L633.3 371.2 L637.5 371.2 L637.5 361.6 Z" class="w"/>
<path d="M635.4 361.9 L635.4 371.2" stroke-width="3.4" stroke-dasharray="0.45 0.9" stroke="#666"/>
<ellipse cx="635.4" cy="358.1" rx="3.7" ry="3.3" class="w" stroke-width="1.3"/>
<ellipse cx="635.4" cy="357.6" rx="2.1" ry="1.6" />
<path d="M630.8 384.3 L633.1 380.8 L639.2 377.8 L651.4 375.5 L663.6 377.8 L670.1 380.8 L672.4 384.3 L672.4 394.7 L665.7 396.0 L665.7 390.7 L651.4 386.9 L639.2 390.7 L639.2 396.0 L630.8 394.7 Z" class="w" stroke="none"/>
<path d="M630.8 384.3 C631.2 383.7 631.7 381.9 633.1 380.8 C634.5 379.7 636.1 378.7 639.2 377.8 C642.3 376.9 647.3 375.5 651.4 375.5 C655.5 375.5 660.5 376.9 663.6 377.8 C666.7 378.7 668.6 379.7 670.1 380.8 C671.5 381.9 672.0 383.7 672.4 384.3" stroke-width="1.1"/>
<path d="M632.6 385.5 C633.7 384.6 636.1 381.6 639.2 380.4 C642.3 379.2 647.3 378.2 651.4 378.2 C655.5 378.2 660.4 379.2 663.6 380.4 C666.8 381.6 669.4 384.6 670.6 385.5" />
<path d="M639.2 385.5 C641.2 384.8 647.2 381.2 651.4 381.1 C655.6 381.1 662.3 384.5 664.5 385.1" />
<path d="M639.2 391.2 C641.2 390.5 647.0 386.9 651.4 386.9 C655.8 386.9 663.3 390.5 665.7 391.2" stroke-width="1"/>
<path d="M640.9 388.3 C642.7 387.7 647.6 384.8 651.4 384.8 C655.2 384.7 661.6 387.4 663.6 387.9" stroke-width="0.7"/>
<path d="M630.8 384.3 L630.8 394.7 L639.2 396.0 L639.2 388.6" />
<path d="M672.4 384.3 L672.4 394.7 L665.7 396.0 L665.7 388.6" />
<path d="M630.8 386.9 L639.2 387.8" stroke-width="0.7"/>
<path d="M672.4 386.9 L665.7 387.8" stroke-width="0.7"/>
<ellipse cx="635.4" cy="391.4" rx="1.7" ry="1.7" />
<ellipse cx="668.7" cy="391.1" rx="1.7" ry="1.7" />
<path d="M639.2 385.5 L641.8 386.5 L640.6 388.6" stroke-width="0.7"/>
<path d="M630.8 406.1 L636.6 405.7 L651.4 413.4 L666.8 405.7 L672.4 406.1 L672.4 414.8 L669.2 421.8 L661.5 428.8 L660.8 446.2 L661.5 449.7 L661.5 465.4 L651.4 468.0 L641.6 465.4 L641.6 449.7 L642.3 446.2 L641.8 428.8 L634.0 421.8 L630.8 414.8 Z" class="w" stroke="none"/>
<path d="M636.6 405.9 C637.3 406.7 638.5 409.2 640.9 410.4 C643.4 411.7 647.9 413.6 651.4 413.6 C654.9 413.6 659.3 411.7 661.9 410.4 C664.4 409.2 666.0 406.7 666.8 405.9" stroke-width="1.1"/>
<path d="M633.1 407.8 C634.1 408.8 636.1 411.9 639.2 413.4 C642.3 414.9 647.3 416.9 651.4 416.9 C655.5 416.9 660.5 414.9 663.6 413.4 C666.8 411.9 669.2 408.8 670.3 407.8" />
<path d="M630.8 406.1 L636.6 405.9" />
<path d="M666.8 405.9 L672.4 406.1" />
<path d="M630.8 406.1 L633.1 407.8" />
<path d="M672.4 406.1 L670.3 407.8" />
<path d="M630.8 406.1 C630.8 407.5 630.3 412.2 630.8 414.8 C631.3 417.4 632.1 419.5 634.0 421.8 C635.8 424.1 640.4 426.2 641.8 428.8 C643.2 431.4 642.3 434.4 642.3 437.5 C642.4 440.5 642.3 445.5 642.3 447.1" />
<path d="M672.4 406.1 C672.4 407.5 672.9 412.2 672.4 414.8 C671.8 417.4 671.0 419.5 669.2 421.8 C667.4 424.1 662.9 426.2 661.5 428.8 C660.1 431.4 661.0 434.4 660.8 437.5 C660.7 440.5 660.8 445.5 660.8 447.1" />
<path d="M633.1 408.2 C633.2 409.3 633.0 413.1 633.6 415.2 C634.2 417.2 634.8 418.4 636.6 420.4 C638.3 422.4 642.8 425.9 644.1 427.0" stroke-width="0.7"/>
<path d="M670.3 408.2 C670.2 409.3 670.3 413.1 669.7 415.2 C669.2 417.2 668.5 418.4 666.8 420.4 C665.0 422.4 660.5 425.9 659.3 427.0" stroke-width="0.7"/>
<path d="M645.3 418.3 L657.5 418.3 L655.8 443.1 L647.6 443.1 Z" />
<path d="M644.1 416.2 L659.3 416.2" stroke-width="0.7"/>
<path d="M644.1 416.2 C644.1 418.0 644.1 422.6 644.4 427.0 C644.8 431.4 645.9 440.1 646.2 442.7" stroke-width="0.7"/>
<path d="M659.3 416.2 C659.2 418.0 659.1 422.6 658.7 427.0 C658.4 431.4 657.3 440.1 657.0 442.7" stroke-width="0.7"/>
<ellipse cx="634.0" cy="420.4" rx="1.0" ry="1.7" transform="rotate(-30 634.0 420.4)" />
<ellipse cx="668.2" cy="420.4" rx="1.0" ry="1.7" transform="rotate(30 668.2 420.4)" />
<path class="w" d="M641.3 449.2 L641.3 465.1 A10.2 3.6 0 0 0 661.5 465.1 L661.5 449.2 Z"/>
<path d="M641.3 458.1 C643.0 458.7 648.0 461.6 651.4 461.6 C654.8 461.6 659.8 458.7 661.5 458.1" stroke-width="0.8"/>
<ellipse cx="651.4" cy="449.0" rx="10.1" ry="4.4" class="w" stroke-width="1.1"/>
<ellipse cx="651.4" cy="449.4" rx="7.3" ry="2.8" />
</g>

<!-- piston front -->
<g stroke="#2e2e2e" stroke-width="0.85">
<path d="M624.3 520.3 C624.3 518.6 624.3 514.6 624.3 510.2 C624.3 505.8 624.0 497.3 624.3 494.1 C624.5 490.9 624.8 491.7 625.6 490.9 C626.3 490.0 627.5 489.3 628.6 488.9 C629.7 488.4 630.1 488.4 632.3 488.3 C634.6 488.2 640.5 488.3 642.2 488.3" class="w"/>
<path d="M678.6 520.3 C678.6 518.6 678.6 514.6 678.6 510.2 C678.6 505.8 678.8 497.3 678.6 494.1 C678.4 490.9 678.1 491.7 677.4 490.9 C676.7 490.0 675.7 489.3 674.6 488.9 C673.5 488.4 672.9 488.4 670.6 488.3 C668.3 488.2 662.4 488.3 660.8 488.3" class="w"/>
<path d="M624.3 520.3 L624.3 494.1 L632.3 488.3 L670.6 488.3 L678.6 494.1 L678.6 520.3 Z" class="w" stroke="none"/>
<path d="M624.3 520.3 C624.3 518.6 624.3 514.6 624.3 510.2 C624.3 505.8 624.0 497.3 624.3 494.1 C624.5 490.9 624.8 491.7 625.6 490.9 C626.3 490.0 627.5 489.3 628.6 488.9 C629.7 488.4 630.1 488.4 632.3 488.3 C634.6 488.2 640.5 488.3 642.2 488.3" />
<path d="M678.6 520.3 C678.6 518.6 678.6 514.6 678.6 510.2 C678.6 505.8 678.8 497.3 678.6 494.1 C678.4 490.9 678.1 491.7 677.4 490.9 C676.7 490.0 675.7 489.3 674.6 488.9 C673.5 488.4 672.9 488.4 670.6 488.3 C668.3 488.2 662.4 488.3 660.8 488.3" />
<path d="M632.3 489.6 L632.3 495.1" stroke-width="0.7"/>
<path d="M670.2 489.6 L670.2 495.1" stroke-width="0.7"/>
<path d="M642.2 490.6 C642.3 490.2 642.3 488.8 643.0 488.1 C643.7 487.3 644.8 486.5 646.2 486.0 C647.6 485.6 649.7 485.2 651.4 485.2 C653.2 485.2 655.4 485.6 656.8 486.0 C658.2 486.5 659.3 487.3 660.0 488.1 C660.7 488.8 660.7 490.2 660.8 490.6" class="w"/>
<path d="M644.4 490.6 C644.9 490.1 646.0 488.4 647.2 487.9 C648.4 487.3 650.0 487.0 651.4 487.0 C652.9 487.0 654.6 487.3 655.8 487.9 C657.0 488.4 658.1 490.1 658.6 490.6" />
<path d="M645.2 489.7 L657.8 489.7" stroke-width="0.7"/>
<path d="M646.4 490.1 C647.2 489.8 649.8 488.5 651.4 488.5 C653.1 488.5 655.6 489.8 656.5 490.1" stroke-width="0.7"/>
<path d="M624.3 514.0 A27.18 22.65 0 0 1 678.6 514.0" stroke-width="0.7"/>
<path d="M624.3 515.3 A27.18 22.65 0 0 1 678.6 515.3" stroke-width="0.9"/>
<path d="M624.3 516.6 A27.18 22.65 0 0 1 678.6 516.6" stroke-width="1.0"/>
<path d="M624.3 518.0 A27.18 22.65 0 0 1 678.6 518.0" stroke-width="1.0"/>
<path d="M624.3 519.3 A27.18 22.65 0 0 1 678.6 519.3" stroke-width="0.8"/>
<ellipse cx="651.4" cy="520.3" rx="27.2" ry="22.7" class="w" stroke-width="1.1"/>
<ellipse cx="651.4" cy="520.3" rx="19.1" ry="15.6" stroke-width="0.9"/>
</g>


<!-- watermark -->
<g stroke="none" fill="#efefef" style="mix-blend-mode:multiply">
<path fill-rule="evenodd" d="M597.2 321.4 L600.9 329 L606.9 335.4 L612.2 341.9 L613.8 346.1 L612.2 349.4 L619.7 360.1 L604.2 389.1 L590.7 360.1 L593.4 348.3 L592.4 340.8 L594.5 333.3 L596.1 327.9 Z M598.8 350.4 L605.2 379.4 L613.3 361.2 L609 351.5 L605.8 355.8 L603.1 347.2 Z M599 335 L597 342 L600 344 L601 339 Z"/>
<text transform="translate(521.5 409.9) scale(1.45 1)" x="0" y="0" textLength="115.5" style="font-family:'Liberation Sans',sans-serif;font-size:13.8px;" fill="#eaeaea">LEADVENTURE</text>
</g>

</svg>

<div class="abs" id="hdrtop"></div>
<div class="abs" id="hdr"></div>
<div class="abs row" style="top:677px;background:#fff;"><span style="left:103.9px;width:100px;">13029</span><span style="left:226px;width:100px;">13029-0025</span><span style="left:387.5px;width:200px;">PISTON-ENGINE L0.5</span><span style="left:649.3px;width:100px;">AR</span></div>
<svg class="abs" style="left:76.3px;top:677.6px;" width="15" height="17" viewBox="0 0 15 17"><path d="M0.6 3 Q0.6 1.2 2 1.2 H12.4 Q13.8 1.2 13.8 3 V15.5 H0.6 Z" fill="#fdfdff"/><rect x="1.65" y="0.3" width="1.25" height="1.2" fill="#0a0a0a"/><rect x="1.65" y="2.3" width="1.25" height="1.2" fill="#0a0a0a"/><rect x="3.65" y="0.3" width="1.25" height="1.2" fill="#0a0a0a"/><rect x="3.65" y="2.3" width="1.25" height="1.2" fill="#0a0a0a"/><rect x="5.65" y="0.3" width="1.25" height="1.2" fill="#0a0a0a"/><rect x="5.65" y="2.3" width="1.25" height="1.2" fill="#0a0a0a"/><rect x="7.65" y="0.3" width="1.25" height="1.2" fill="#0a0a0a"/><rect x="7.65" y="2.3" width="1.25" height="1.2" fill="#0a0a0a"/><rect x="9.55" y="0.3" width="1.25" height="1.2" fill="#0a0a0a"/><rect x="9.55" y="2.3" width="1.25" height="1.2" fill="#0a0a0a"/><rect x="11.55" y="0.3" width="1.25" height="1.2" fill="#0a0a0a"/><rect x="11.55" y="2.3" width="1.25" height="1.2" fill="#0a0a0a"/><path d="M14.2 2.6 V15.9" stroke="#0d0d2a" stroke-width="0.9"/><path d="M0.55 2.8 V15.6" stroke="#444" stroke-width="0.7"/><path d="M0.5 15.9 H14.6" stroke="#0a0a0a" stroke-width="1.1"/><path d="M0.7 1.9 L1.6 1.2 M13.6 1.9 L12.9 1.2" stroke="#111" stroke-width="0.8"/><path d="M3.1 5.8 H5.3 M6.9 5.8 H8.2 M3.1 7.8 H5.9 M8.2 9.8 H10.5 M9.8 11.8 H10.7" stroke="#12124a" stroke-width="1.25"/><path d="M2.3 9.9 L5.1 12.2 L12.2 4.6" fill="none" stroke="#15154e" stroke-width="1.7" stroke-linejoin="miter"/></svg>
<div class="abs row" style="top:695px;background:#6a9ad9;"><span style="left:103.9px;width:100px;">13031</span><span style="left:226px;width:100px;">13031-0855</span><span style="left:387.5px;width:200px;">CRANKSHAFT-COMP</span><span style="left:649.3px;width:100px;">1</span></div>
<svg class="abs" style="left:76.3px;top:695.6px;" width="15" height="17" viewBox="0 0 15 17"><path d="M0.6 3 Q0.6 1.2 2 1.2 H12.4 Q13.8 1.2 13.8 3 V15.5 H0.6 Z" fill="#fdfdff"/><rect x="1.65" y="0.3" width="1.25" height="1.2" fill="#0a0a0a"/><rect x="1.65" y="2.3" width="1.25" height="1.2" fill="#0a0a0a"/><rect x="3.65" y="0.3" width="1.25" height="1.2" fill="#0a0a0a"/><rect x="3.65" y="2.3" width="1.25" height="1.2" fill="#0a0a0a"/><rect x="5.65" y="0.3" width="1.25" height="1.2" fill="#0a0a0a"/><rect x="5.65" y="2.3" width="1.25" height="1.2" fill="#0a0a0a"/><rect x="7.65" y="0.3" width="1.25" height="1.2" fill="#0a0a0a"/><rect x="7.65" y="2.3" width="1.25" height="1.2" fill="#0a0a0a"/><rect x="9.55" y="0.3" width="1.25" height="1.2" fill="#0a0a0a"/><rect x="9.55" y="2.3" width="1.25" height="1.2" fill="#0a0a0a"/><rect x="11.55" y="0.3" width="1.25" height="1.2" fill="#0a0a0a"/><rect x="11.55" y="2.3" width="1.25" height="1.2" fill="#0a0a0a"/><path d="M14.2 2.6 V15.9" stroke="#0d0d2a" stroke-width="0.9"/><path d="M0.55 2.8 V15.6" stroke="#444" stroke-width="0.7"/><path d="M0.5 15.9 H14.6" stroke="#0a0a0a" stroke-width="1.1"/><path d="M0.7 1.9 L1.6 1.2 M13.6 1.9 L12.9 1.2" stroke="#111" stroke-width="0.8"/><path d="M3.1 5.8 H5.3 M6.9 5.8 H8.2 M3.1 7.8 H5.9 M8.2 9.8 H10.5 M9.8 11.8 H10.7" stroke="#12124a" stroke-width="1.25"/><path d="M2.3 9.9 L5.1 12.2 L12.2 4.6" fill="none" stroke="#15154e" stroke-width="1.7" stroke-linejoin="miter"/></svg>
<svg class="abs" style="left:22.6px;top:696px;" width="17" height="17" viewBox="0 0 17 17"><path d="M0.4 5.6 L5.2 0.6 L6.2 3.4 C11.5 3.2 15.4 8.5 15.4 16 C13.6 11.5 11 8.6 7.8 8.2 L8.8 11 Z" fill="#0a0a0a"/></svg>
<div class="abs row" style="top:713px;background:#fff;"><span style="left:103.9px;width:100px;">13251</span><span style="left:226px;width:100px;">13251-0732</span><span style="left:387.5px;width:200px;">ROD-ASSY-CONNECTING</span><span style="left:649.3px;width:100px;">2</span></div>
<svg class="abs" style="left:76.3px;top:713.6px;" width="15" height="17" viewBox="0 0 15 17"><path d="M0.6 3 Q0.6 1.2 2 1.2 H12.4 Q13.8 1.2 13.8 3 V15.5 H0.6 Z" fill="#fdfdff"/><rect x="1.65" y="0.3" width="1.25" height="1.2" fill="#0a0a0a"/><rect x="1.65" y="2.3" width="1.25" height="1.2" fill="#0a0a0a"/><rect x="3.65" y="0.3" width="1.25" height="1.2" fill="#0a0a0a"/><rect x="3.65" y="2.3" width="1.25" height="1.2" fill="#0a0a0a"/><rect x="5.65" y="0.3" width="1.25" height="1.2" fill="#0a0a0a"/><rect x="5.65" y="2.3" width="1.25" height="1.2" fill="#0a0a0a"/><rect x="7.65" y="0.3" width="1.25" height="1.2" fill="#0a0a0a"/><rect x="7.65" y="2.3" width="1.25" height="1.2" fill="#0a0a0a"/><rect x="9.55" y="0.3" width="1.25" height="1.2" fill="#0a0a0a"/><rect x="9.55" y="2.3" width="1.25" height="1.2" fill="#0a0a0a"/><rect x="11.55" y="0.3" width="1.25" height="1.2" fill="#0a0a0a"/><rect x="11.55" y="2.3" width="1.25" height="1.2" fill="#0a0a0a"/><path d="M14.2 2.6 V15.9" stroke="#0d0d2a" stroke-width="0.9"/><path d="M0.55 2.8 V15.6" stroke="#444" stroke-width="0.7"/><path d="M0.5 15.9 H14.6" stroke="#0a0a0a" stroke-width="1.1"/><path d="M0.7 1.9 L1.6 1.2 M13.6 1.9 L12.9 1.2" stroke="#111" stroke-width="0.8"/><path d="M3.1 5.8 H5.3 M6.9 5.8 H8.2 M3.1 7.8 H5.9 M8.2 9.8 H10.5 M9.8 11.8 H10.7" stroke="#12124a" stroke-width="1.25"/><path d="M2.3 9.9 L5.1 12.2 L12.2 4.6" fill="none" stroke="#15154e" stroke-width="1.7" stroke-linejoin="miter"/></svg>
<div class="abs row" style="top:731px;background:#e5e3de;"><span style="left:103.9px;width:100px;">92033</span><span style="left:226px;width:100px;">92033-0726</span><span style="left:387.5px;width:200px;">RING-SNAP</span><span style="left:649.3px;width:100px;">4</span></div>
<svg class="abs" style="left:76.3px;top:731.6px;" width="15" height="17" viewBox="0 0 15 17"><path d="M0.6 3 Q0.6 1.2 2 1.2 H12.4 Q13.8 1.2 13.8 3 V15.5 H0.6 Z" fill="#fdfdff"/><rect x="1.65" y="0.3" width="1.25" height="1.2" fill="#0a0a0a"/><rect x="1.65" y="2.3" width="1.25" height="1.2" fill="#0a0a0a"/><rect x="3.65" y="0.3" width="1.25" height="1.2" fill="#0a0a0a"/><rect x="3.65" y="2.3" width="1.25" height="1.2" fill="#0a0a0a"/><rect x="5.65" y="0.3" width="1.25" height="1.2" fill="#0a0a0a"/><rect x="5.65" y="2.3" width="1.25" height="1.2" fill="#0a0a0a"/><rect x="7.65" y="0.3" width="1.25" height="1.2" fill="#0a0a0a"/><rect x="7.65" y="2.3" width="1.25" height="1.2" fill="#0a0a0a"/><rect x="9.55" y="0.3" width="1.25" height="1.2" fill="#0a0a0a"/><rect x="9.55" y="2.3" width="1.25" height="1.2" fill="#0a0a0a"/><rect x="11.55" y="0.3" width="1.25" height="1.2" fill="#0a0a0a"/><rect x="11.55" y="2.3" width="1.25" height="1.2" fill="#0a0a0a"/><path d="M14.2 2.6 V15.9" stroke="#0d0d2a" stroke-width="0.9"/><path d="M0.55 2.8 V15.6" stroke="#444" stroke-width="0.7"/><path d="M0.5 15.9 H14.6" stroke="#0a0a0a" stroke-width="1.1"/><path d="M0.7 1.9 L1.6 1.2 M13.6 1.9 L12.9 1.2" stroke="#111" stroke-width="0.8"/><path d="M3.1 5.8 H5.3 M6.9 5.8 H8.2 M3.1 7.8 H5.9 M8.2 9.8 H10.5 M9.8 11.8 H10.7" stroke="#12124a" stroke-width="1.25"/><path d="M2.3 9.9 L5.1 12.2 L12.2 4.6" fill="none" stroke="#15154e" stroke-width="1.7" stroke-linejoin="miter"/></svg>
<svg class="abs" style="left:22.6px;top:732px;" width="17" height="17" viewBox="0 0 17 17"><path d="M0.4 5.6 L5.2 0.6 L6.2 3.4 C11.5 3.2 15.4 8.5 15.4 16 C13.6 11.5 11 8.6 7.8 8.2 L8.8 11 Z" fill="#0a0a0a"/></svg>
<div class="abs" id="hdr2" style="left:0;top:649px;width:909px;height:31.6px;background:#3a3b38;"></div>

<!-- header labels -->
<div class="hd" style="left:135.5px;top:658px;">Ref #</div>
<div class="hd" style="left:255.5px;top:658px;">Part #</div>
<div class="hd" style="left:461px;top:658px;">Description</div>
<div class="hd" style="left:692.5px;top:658px;">Qty</div>
<div class="hd" style="left:853px;top:658px;">Context Note</div>
<svg class="abs" style="left:84.5px;top:661px;" width="8" height="10" viewBox="0 0 8 10"><path d="M4 0 L7.8 4 L0.2 4 Z M0.2 6 L7.8 6 L4 10 Z" fill="#fff"/></svg>
<svg class="abs" style="left:197.5px;top:661px;" width="8" height="10" viewBox="0 0 8 10"><path d="M4 0 L7.8 4 L0.2 4 Z M0.2 6 L7.8 6 L4 10 Z" fill="#fff"/></svg>
<svg class="abs" style="left:328.2px;top:661px;" width="8" height="10" viewBox="0 0 8 10"><path d="M4 0 L7.8 4 L0.2 4 Z M0.2 6 L7.8 6 L4 10 Z" fill="#fff"/></svg>
<svg class="abs" style="left:621.5px;top:661px;" width="8" height="10" viewBox="0 0 8 10"><path d="M4 0 L7.8 4 L0.2 4 Z M0.2 6 L7.8 6 L4 10 Z" fill="#fff"/></svg>
<svg class="abs" style="left:751.3px;top:661px;" width="8" height="10" viewBox="0 0 8 10"><path d="M4 0 L7.8 4 L0.2 4 Z M0.2 6 L7.8 6 L4 10 Z" fill="#fff"/></svg>
<svg class="abs" style="left:447px;top:657px;" width="12" height="12" viewBox="0 0 12 12"><rect x="0" y="0" width="12" height="12" rx="2" fill="#1b76e6"/><path d="M2.6 6.2 L4.9 8.6 L9.6 3.2" fill="none" stroke="#fff" stroke-width="1.7"/></svg>
<svg class="abs" style="left:679px;top:657px;" width="12" height="12" viewBox="0 0 12 12"><rect x="0" y="0" width="12" height="12" rx="2" fill="#1b76e6"/><path d="M2.6 6.2 L4.9 8.6 L9.6 3.2" fill="none" stroke="#fff" stroke-width="1.7"/></svg>
<svg class="abs" style="left:839px;top:657px;" width="12" height="12" viewBox="0 0 12 12"><rect x="0" y="0" width="12" height="12" rx="2" fill="#1b76e6"/><path d="M2.6 6.2 L4.9 8.6 L9.6 3.2" fill="none" stroke="#fff" stroke-width="1.7"/></svg>
<div class="abs" id="lb"></div>
</body>
</html>
